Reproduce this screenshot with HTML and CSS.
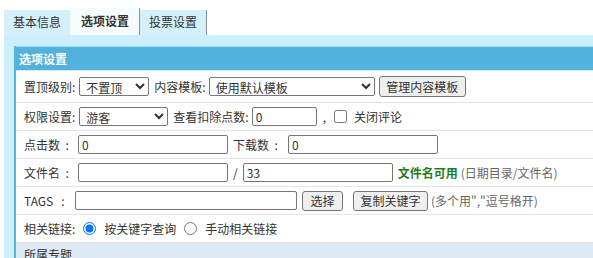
FILE: index.html
```html
<!DOCTYPE html>
<html lang="zh-CN">
<head>
  <meta charset="UTF-8">
  <title>选项设置</title>
  <link rel="stylesheet" href="styles.css">
</head>
<body>
  <ul class="tabs">
    <li class="tab">基本信息</li>
    <li class="tab active">选项设置</li>
    <li class="tab">投票设置</li>
  </ul>
  <div class="tab-body">
    <div class="box">
      <div class="box-title">选项设置</div>
      <div class="row row-first">
        <span class="lbl">置顶级别:</span>
        <select class="sel sel-top"><option>不置顶</option></select>
        <span class="lbl ml5">内容模板:</span>
        <select class="sel sel-tpl"><option>使用默认模板</option></select>
        <button class="btn btn-tpl">管理内容模板</button>
      </div>
      <div class="row">
        <span class="lbl">权限设置:</span>
        <select class="sel sel-perm"><option>游客</option></select>
        <span class="lbl ml5">查看扣除点数:</span>
        <input class="txt txt-point" value="0">
        <span class="comma">,</span>
        <input type="checkbox" class="chk">
        <span class="lbl">关闭评论</span>
      </div>
      <div class="row">
        <span class="lbl w54">点击数&nbsp;&nbsp;:</span>
        <input class="txt txt-150" value="0">
        <span class="lbl w55 ml5">下载数&nbsp;&nbsp;:</span>
        <input class="txt txt-150" value="0">
      </div>
      <div class="row">
        <span class="lbl w54">文件名&nbsp;&nbsp;:</span>
        <input class="txt txt-150" value="">
        <span class="slash">/</span>
        <input class="txt txt-150" value="33">
        <span class="ok">文件名可用</span>
        <span class="hint">(日期目录/文件名)</span>
      </div>
      <div class="row">
        <span class="lbl w51">TAGS&nbsp;&nbsp;&nbsp;:</span>
        <input class="txt txt-tags" value="">
        <button class="btn btn-pick">选择</button>
        <button class="btn btn-copy">复制关键字</button>
        <span class="hint">(多个用","逗号格开)</span>
      </div>
      <div class="row">
        <span class="lbl">相关链接:</span>
        <input type="radio" name="link" class="rad" checked>
        <span class="lbl">按关键字查询</span>
        <input type="radio" name="link" class="rad">
        <span class="lbl">手动相关链接</span>
      </div>
      <div class="row row-sub">所属专题</div>
    </div>
  </div>
</body>
</html>
```

FILE: styles.css
```css
body {
  margin: 0;
  font-family: "Noto Sans CJK SC", "Liberation Sans", sans-serif;
  font-size: 12px;
  color: #333;
  overflow: hidden;
}
.tabs {
  list-style: none;
  margin: 0;
  padding: 8px 0 0 4px;
  display: flex;
  align-items: flex-end;
}
.tab {
  height: 25px;
  line-height: 24px;
  padding: 0 9px;
  white-space: nowrap;
  background-color: #d4f0fb;
}
.tab.active {
  height: 27px;
  line-height: 26px;
  padding: 0 10px 0 11px;
  background-color: #f6fcfe;
  font-weight: bold;
  border-right: 1px solid #8a969c;
}
.tab:last-child {
  border-right: 1px solid #8a969c;
}
.tab-body {
  background-color: #cdeefb;
  margin-left: 4px;
  padding: 11px 0 0 10px;
  height: 300px;
}
.box {
  background-color: #fff;
  border-left: 2px solid #56b6df;
}
.box-title {
  height: 23px;
  line-height: 23px;
  border-top: 1px solid #a6def2;
  border-bottom: 1px solid #d8e6ec;
  background-color: #50b2dd;
  color: #fff;
  font-weight: bold;
  padding-left: 3px;
}
.row {
  display: flex;
  align-items: center;
  height: 27px;
  padding-left: 8px;
  border-bottom: 1px solid #e4e4e4;
  white-space: nowrap;
}
.row-first {
  height: 31px;
}
.row-sub {
  background-color: #dde9f4;
  border-bottom: none;
  height: 22px;
}
.lbl {
  display: inline-block;
}
.ml5 {
  margin-left: 5px;
}
.w54 {
  width: 54px;
}
.w55 {
  width: 55px;
}
.w51 {
  width: 51px;
}
.sel,
.txt,
.btn {
  font-family: inherit;
  font-size: 12px;
  color: #333;
  box-sizing: border-box;
}
.sel {
  height: 19px;
  margin-left: 4px;
  padding: 0 2px;
  border: 1px solid #767676;
  border-radius: 2px;
  background-color: #fff;
}
.sel-top {
  width: 70px;
}
.sel-tpl {
  width: 166px;
  margin-left: 3px;
}
.sel-perm {
  width: 89px;
}
.txt {
  height: 19px;
  padding: 0 3px;
  margin: 0;
  border: 1px solid #767676;
  border-radius: 2px;
}
.txt-point {
  width: 65px;
  margin-left: 3px;
}
.txt-150 {
  width: 150px;
}
.txt-tags {
  width: 222px;
}
.btn {
  height: 21px;
  padding: 0 6px;
  border: 1px solid #767676;
  border-radius: 3px;
  background-color: #efefef;
}
.btn-tpl {
  width: 87px;
  margin-left: 4px;
}
.btn-pick {
  width: 41px;
  height: 20px;
  margin-left: 5px;
}
.btn-copy {
  width: 75px;
  height: 20px;
  margin-left: 10px;
}
.comma {
  margin: 0 5px 0 6px;
}
.chk {
  width: 13px;
  height: 13px;
  margin: 0 7px 0 3px;
}
.rad {
  width: 13px;
  height: 13px;
  margin: 0 8px;
}
.slash {
  margin: 0 5px;
}
.ok {
  color: #1f7c1f;
  font-weight: bold;
  margin-left: 5px;
}
.hint {
  color: #666;
  margin-left: 3px;
}
```
